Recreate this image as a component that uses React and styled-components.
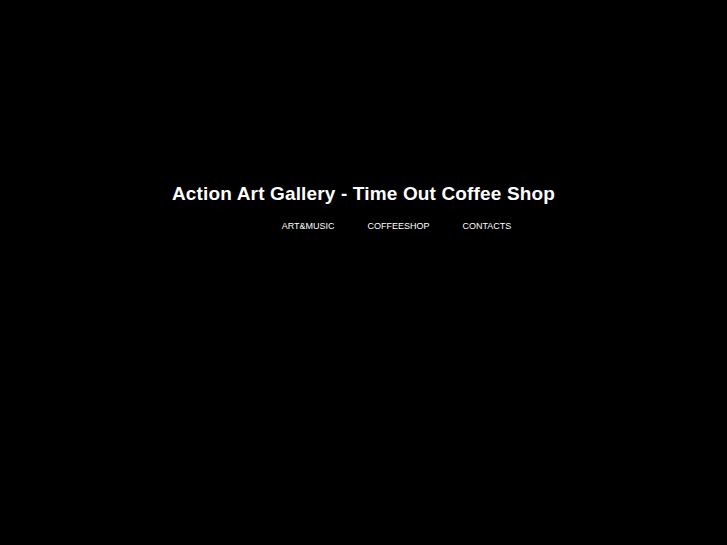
import styled, { createGlobalStyle } from 'styled-components';

const Global = createGlobalStyle`
  html, body {
    margin: 0;
    background: #000;
  }
  body {
    font-family: "Liberation Sans", Arial, sans-serif;
  }
`;

const Page = styled.div`
  min-height: 545px;
  background: #000;
  padding-top: 182px;
  box-sizing: border-box;
`;

const Title = styled.h1`
  margin: 0;
  text-align: center;
  color: #fff;
  font-size: 19px;
  letter-spacing: 0.15px;
  font-weight: bold;
  line-height: 24px;
`;

const Nav = styled.ul`
  list-style: none;
  margin: 9px 0 0;
  padding: 0 0 0 66px;
  display: flex;
  justify-content: center;
  gap: 33px;
`;

const NavItem = styled.li`
  a {
    color: #fff;
    font-size: 9px;
    text-decoration: none;
    text-transform: uppercase;
  }
`;

const items = ['Art&Music', 'Coffeeshop', 'Contacts'];

const App = () => {
  return (
    <Page>
      <Global />
      <Title>Action Art Gallery - Time Out Coffee Shop</Title>
      <Nav>
        {items.map((item) => (
          <NavItem key={item}>
            <a href="#">{item}</a>
          </NavItem>
        ))}
      </Nav>
    </Page>
  );
};

export default App;
